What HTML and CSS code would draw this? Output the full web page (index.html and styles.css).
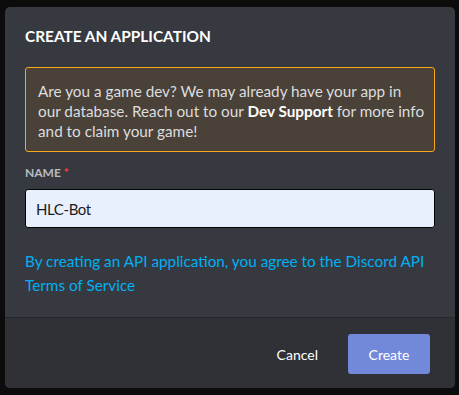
FILE: index.html
```html
<!DOCTYPE html>
<html lang="en">
<head>
    <meta charset="UTF-8">
    <meta name="viewport" content="width=device-width, initial-scale=1.0">
    <title>Create an Application</title>
    <link rel="stylesheet" href="styles.css">
</head>
<body>
    <!-- Create Application Modal -->
    <div class="modal">
        <div class="modal-body">
            <h2 class="modal-title">Create an Application</h2>

            <div class="notice">
                Are you a game dev? We may already have your app in<br>
                our database. Reach out to our <strong>Dev Support</strong> for more info and to claim your game!
            </div>

            <label class="field-label" for="appName">Name<span class="required">*</span></label>
            <input class="field-input" id="appName" type="text" value="HLC-Bot">

            <a class="terms" href="#">By creating an API application, you agree to the Discord API Terms of Service</a>
        </div>

        <div class="modal-footer">
            <button class="btn-cancel">Cancel</button>
            <button class="btn-create">Create</button>
        </div>
    </div>
</body>
</html>
```

FILE: styles.css
```css
body {
    margin: 0;
    padding: 7px 4px 8px 5px;
    background-color: #0c0c0d;
    font-family: Lato, "Noto Sans", sans-serif;
}
.modal {
    width: 450px;
    background-color: #36393f;
    border-radius: 5px;
    overflow: hidden;
}
.modal-body {
    display: flex;
    flex-direction: column;
    padding: 19px 20px 20px;
}
.modal-title {
    margin: 0 0 21px;
    font-size: 15.4px;
    line-height: 20px;
    font-weight: 700;
    text-transform: uppercase;
    color: #ffffff;
}
.notice {
    padding: 13px 6px 10px 12px;
    border: 1px solid #faa61a;
    border-radius: 3px;
    background-color: #4a4139;
    color: #dcddde;
    font-size: 15.3px;
    line-height: 20px;
}
.notice strong {
    color: #ffffff;
}
.field-label {
    margin: 13px 0 8px;
    font-size: 12px;
    line-height: 16px;
    font-weight: 700;
    text-transform: uppercase;
    color: #b9bbbe;
}
.required {
    margin-left: 3px;
    color: #f04747;
}
.field-input {
    height: 39px;
    box-sizing: border-box;
    padding: 0 10px;
    border: 1px solid #040405;
    border-radius: 3px;
    background-color: #e8f0fe;
    color: #1c1c1c;
    font-family: inherit;
    font-size: 15px;
    letter-spacing: -0.4px;
    outline: none;
}
.terms {
    margin-top: 21px;
    font-size: 15.3px;
    line-height: 24px;
    color: #00b0f4;
    text-decoration: none;
}
.modal-footer {
    display: flex;
    justify-content: flex-end;
    align-items: center;
    gap: 14px;
    padding: 16px 25px 14px;
    background-color: #2f3136;
    border-top: 1px solid #26282c;
}
.modal-footer button {
    height: 40px;
    border: none;
    border-radius: 3px;
    font-family: inherit;
    font-size: 14px;
    color: #ffffff;
    cursor: pointer;
}
.btn-cancel {
    padding: 0 16px;
    background: none;
}
.btn-create {
    width: 82px;
    background-color: #7289da;
}
```
